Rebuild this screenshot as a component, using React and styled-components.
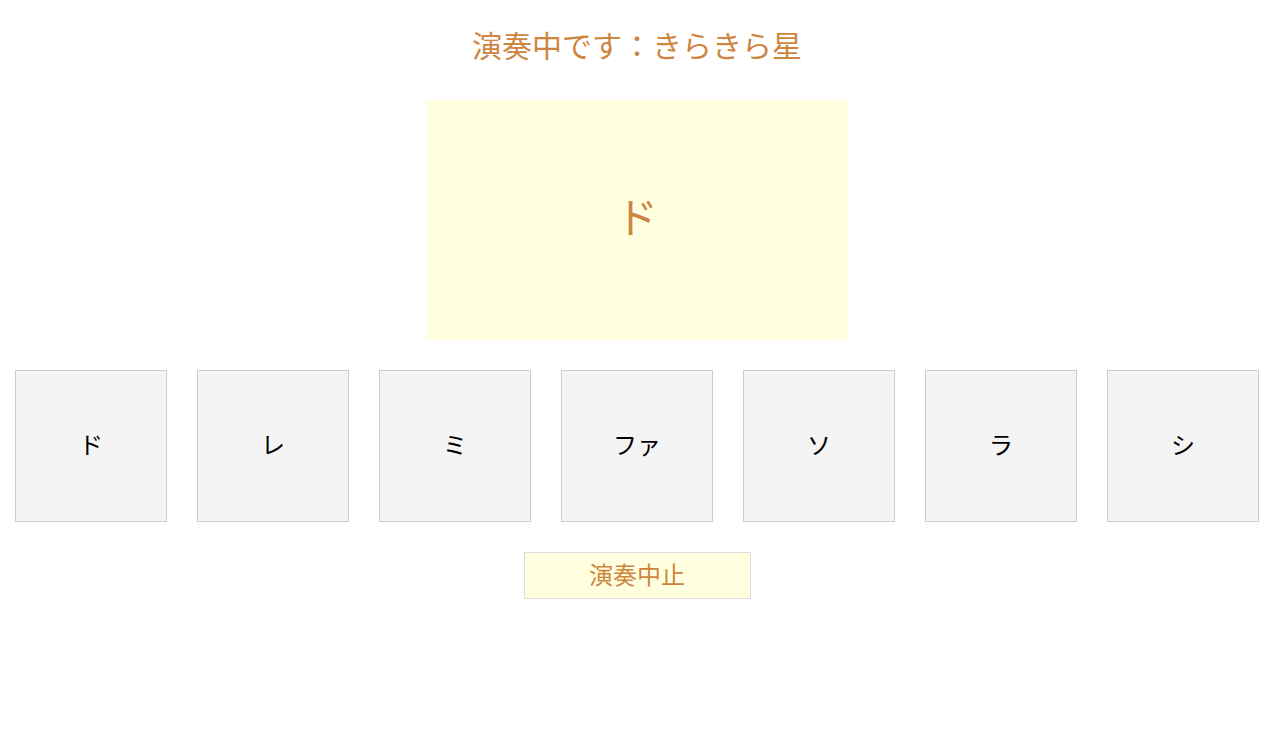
import styled, { createGlobalStyle } from "styled-components"

const GlobalStyle = createGlobalStyle`
  body {
    margin: 0;
    background: #fff;
    font-family: "Noto Sans CJK JP", "Noto Sans", sans-serif;
  }
`

const Page = styled.div`
  width: 1274px;
  display: flex;
  flex-direction: column;
  align-items: center;
`

const Title = styled.h1`
  margin: 0;
  padding-top: 18px;
  height: 80px;
  box-sizing: border-box;
  line-height: 52px;
  font-size: 30px;
  font-weight: 400;
  color: #cd853f;
`

const Display = styled.div`
  width: 420px;
  height: 240px;
  box-sizing: border-box;
  padding-bottom: 12px;
  background: #ffffe0;
  display: flex;
  align-items: center;
  justify-content: center;
  font-size: 42px;
  color: #cd853f;
  margin-top: 20px;
`

const Keyboard = styled.div`
  display: flex;
  margin-top: 15px;
`

const Key = styled.button`
  width: 152px;
  height: 152px;
  margin: 15px;
  box-sizing: border-box;
  border: 1px solid #ccc;
  background: #f4f4f4;
  font-family: inherit;
  font-size: 24px;
  color: #000;
  padding: 0 0 5px;
  cursor: pointer;
`

const StopButton = styled.button`
  margin-top: 15px;
  width: 227px;
  height: 47px;
  box-sizing: border-box;
  border: 1px solid #ddd;
  background: #ffffe0;
  font-family: inherit;
  font-size: 24px;
  color: #cd853f;
  padding: 0 0 5px;
  cursor: pointer;
`

const notes = ["ド", "レ", "ミ", "ファ", "ソ", "ラ", "シ"]

const App = () => {
  return (
    <>
      <GlobalStyle />
      <Page>
        <Title>演奏中です：きらきら星</Title>
        <Display>ド</Display>
        <Keyboard>
          {notes.map((n) => (
            <Key key={n}>{n}</Key>
          ))}
        </Keyboard>
        <StopButton>演奏中止</StopButton>
      </Page>
    </>
  )
}

export default App
